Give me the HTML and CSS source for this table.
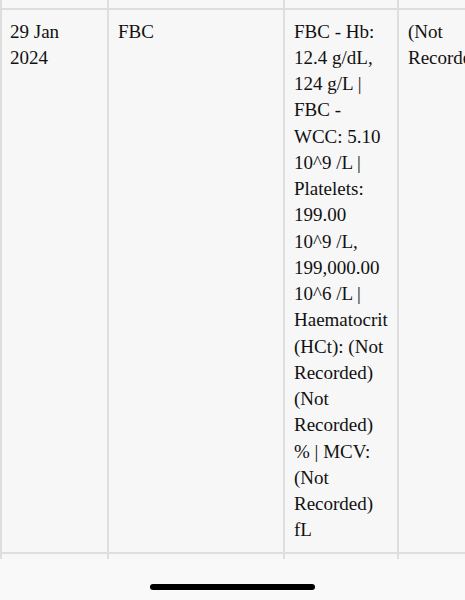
FILE: index.html
```html
<!DOCTYPE html>
<html lang="en">
<head>
<meta charset="utf-8">
<title>Results</title>
<link rel="stylesheet" href="styles.css">
</head>
<body>
<div class="screen">
  <div class="viewport">
    <table class="records">
      <colgroup>
        <col class="c-date">
        <col class="c-test">
        <col class="c-result">
        <col class="c-extra">
      </colgroup>
      <tbody>
        <tr class="row-prev"><td></td><td></td><td></td><td></td></tr>
        <tr class="row">
          <td>29 Jan 2024</td>
          <td>FBC</td>
          <td>FBC - Hb: 12.4 g/dL, 124 g/L | FBC - WCC: 5.10 10^9 /L | Platelets: 199.00 10^9 /L, 199,000.00 10^6 /L | Haematocrit (HCt): (Not Recorded) (Not Recorded) % | MCV: (Not Recorded) fL</td>
          <td>(Not Recorded)</td>
        </tr>
        <tr class="row-next"><td></td><td></td><td></td><td></td></tr>
      </tbody>
    </table>
  </div>
  <div class="home-bar"><span class="home-indicator"></span></div>
</div>
</body>
</html>
```
FILE: styles.css
```css
html, body {
  margin: 0;
  padding: 0;
  background: #f7f7f7;
}
body {
  font-family: "Liberation Serif", "Times New Roman", serif;
  font-size: 19px;
  line-height: 26.25px;
  color: #111;
}
.screen {
  width: 465px;
  height: 600px;
  display: flex;
  flex-direction: column;
  overflow: hidden;
}
.viewport {
  height: 559px;
  overflow: hidden;
  flex: none;
}
.records {
  border-collapse: separate;
  border-spacing: 0;
  table-layout: fixed;
  width: 513px;
}
.c-date { width: 109px; }
.c-test { width: 176px; }
.c-result { width: 114px; }
.c-extra { width: 114px; }
.records td {
  vertical-align: top;
  padding: 8.5px 9px 8.5px 9px;
  border-right: 2px solid #dedede;
  border-bottom: 2px solid #dedede;
  background: #f7f7f7;
  overflow: hidden;
}
.records td:first-child {
  border-left: 2px solid #dedede;
  padding-left: 8px;
}
.row-prev td {
  height: 8px;
  padding: 0;
}
.records .row-prev td:first-child { padding: 0; }
.row-next td {
  height: 40px;
  padding: 0;
}
.records .row-next td:first-child { padding: 0; }
.home-bar {
  flex: 1;
  background: #f9f9f9;
  display: flex;
  justify-content: center;
  align-items: flex-start;
  padding-top: 25px;
  box-sizing: border-box;
}
.home-indicator {
  width: 165px;
  height: 6px;
  border-radius: 3px;
  background: #000;
}
```
